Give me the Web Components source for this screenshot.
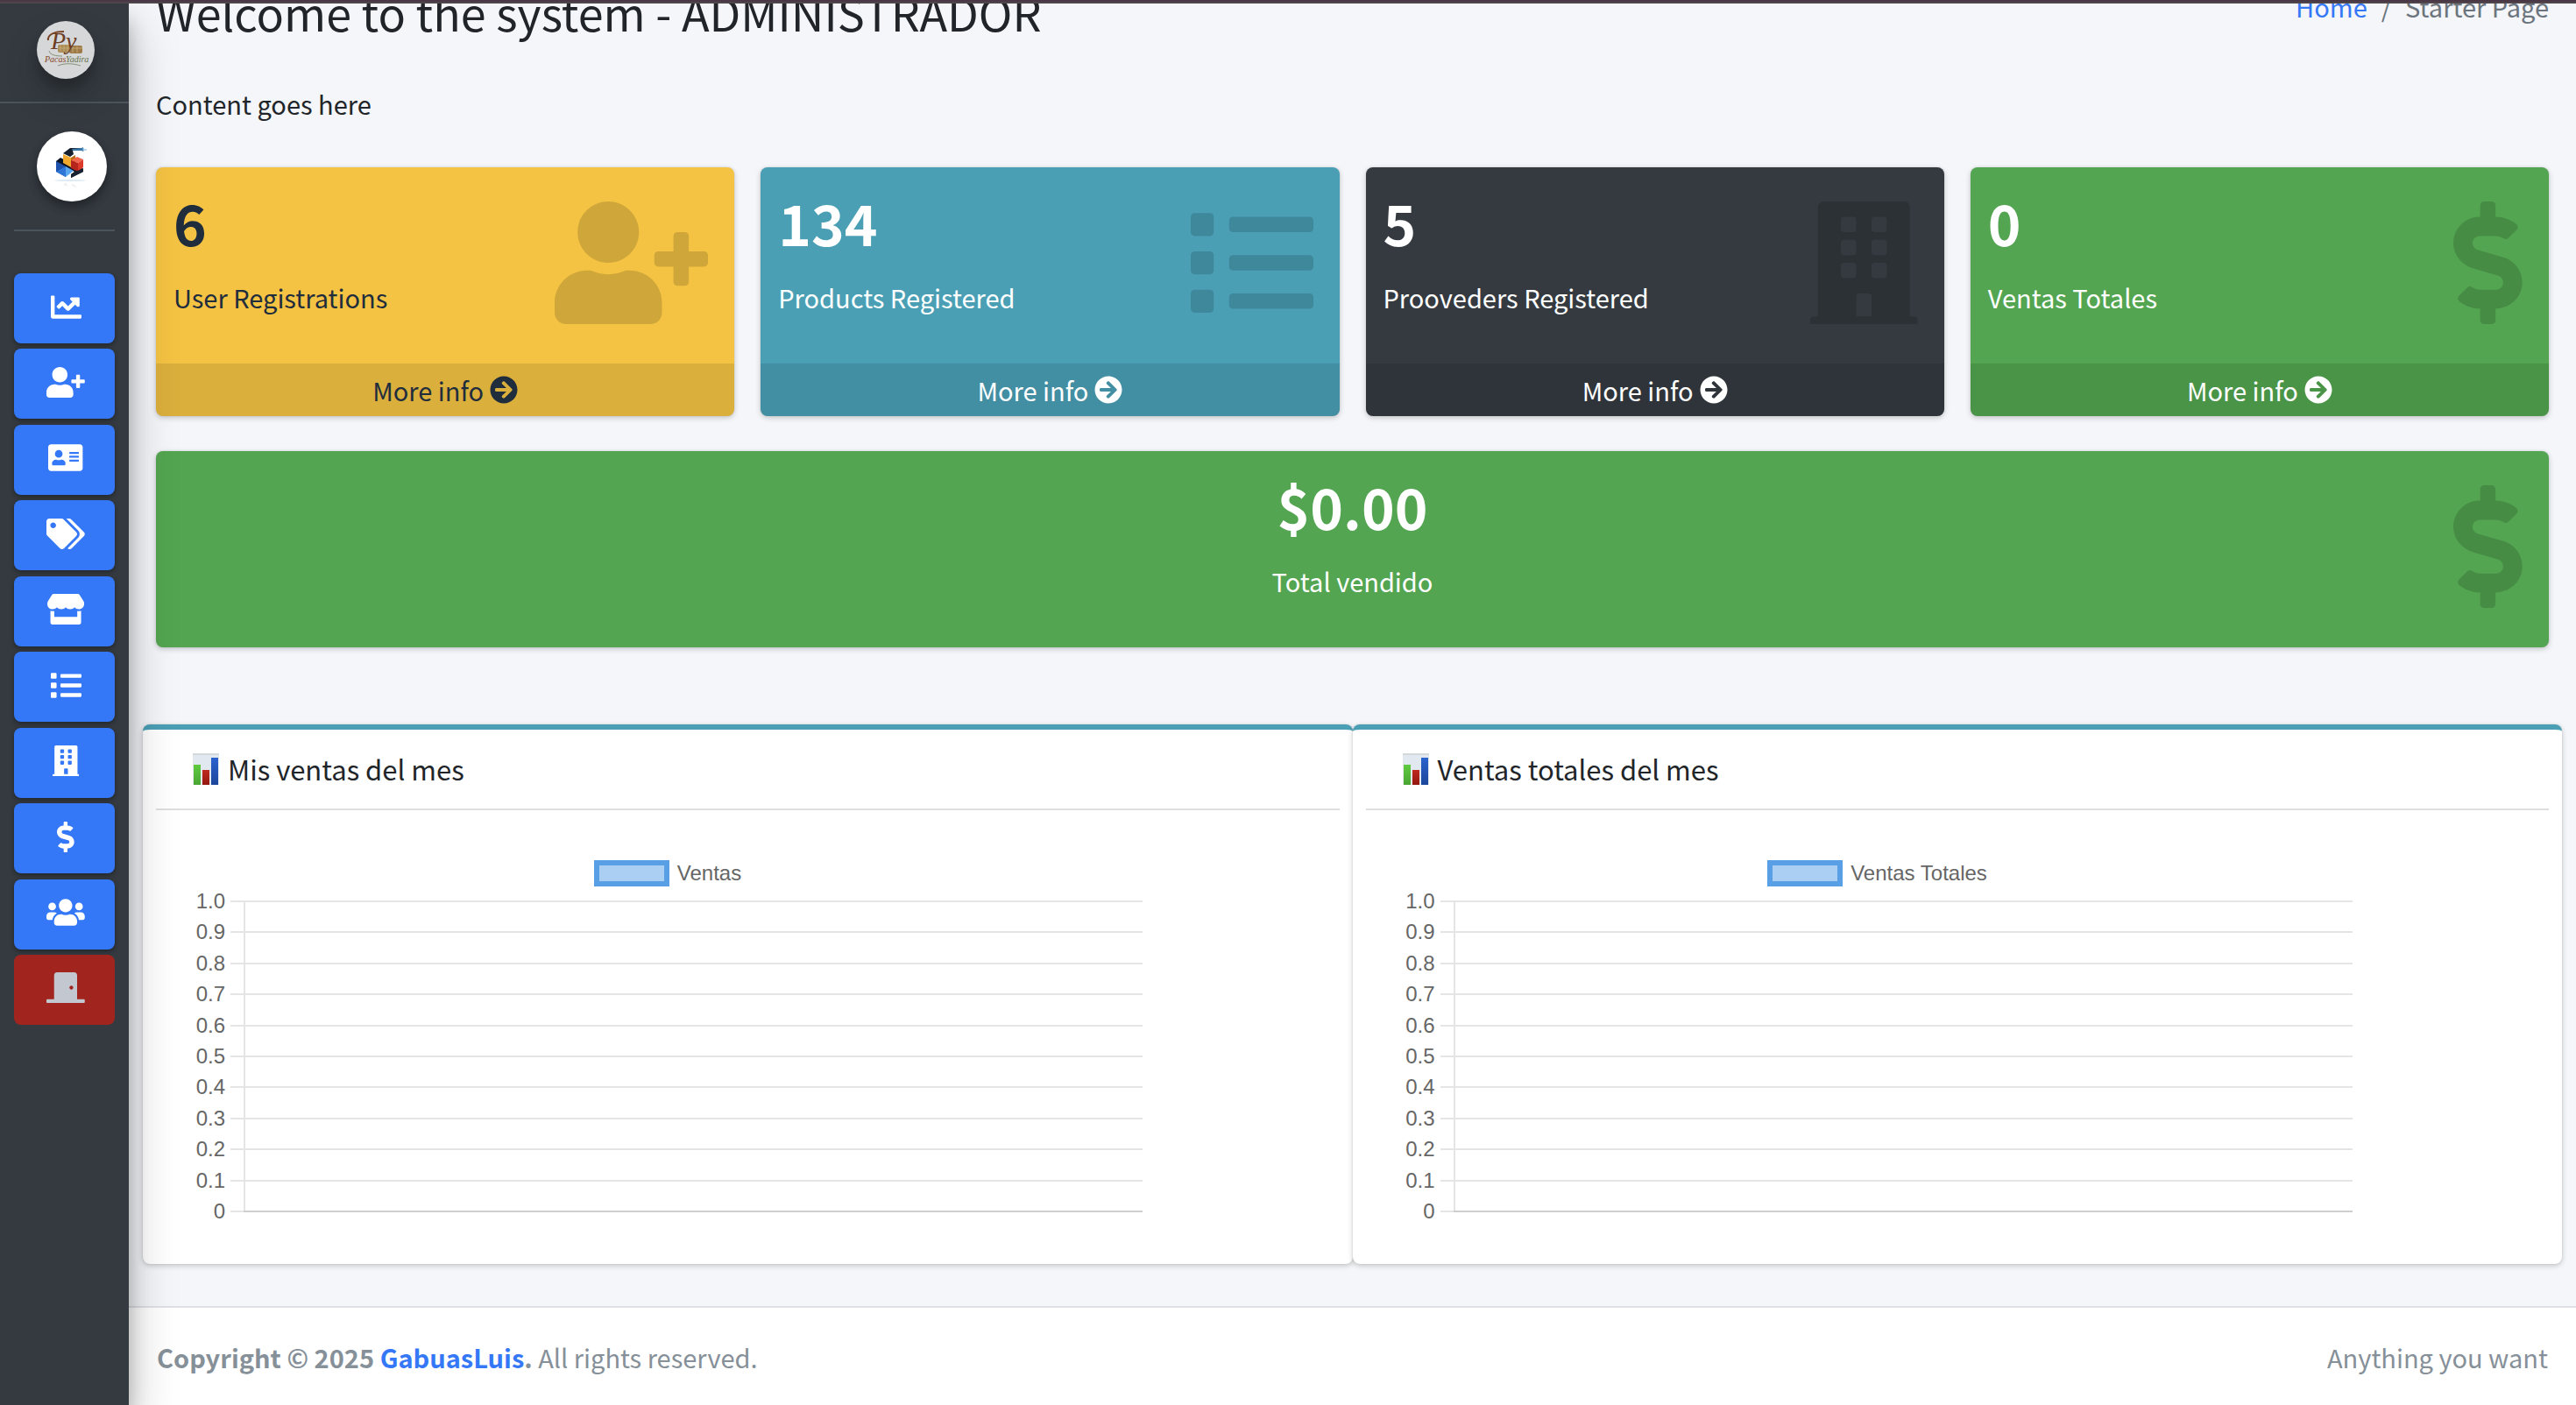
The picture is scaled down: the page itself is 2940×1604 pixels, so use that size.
<!DOCTYPE html>
<html lang="es">
<head>
<meta charset="utf-8">
<title>Starter Page</title>
<style>
  html, body { margin: 0; height: 100%; }
  body {
    overflow: hidden;
    background: #f4f6f9;
    color: #212529;
    font-family: "Noto Sans CJK SC", "Open Sans", sans-serif;
    font-size: 29px;
    line-height: 48px;
    --blue: #3578f7;
    --lift: 0 0 2px rgba(0,0,0,.125), 0 2px 6px rgba(0,0,0,.2);
  }
</style>
</head>
<body>
<app-shell>
  <side-bar slot="side"></side-bar>
  <page-header slot="main" heading="Welcome to the system - ADMINISTRADOR"></page-header>
  <page-content slot="main">
    <p slot="intro" style="margin:0">Content goes here</p>
    <stat-box slot="stats" tone="warning" value="6" icon="user-plus" link>User Registrations</stat-box>
    <stat-box slot="stats" tone="info" value="134" icon="list" link>Products Registered</stat-box>
    <stat-box slot="stats" tone="dark" value="5" icon="building" link>Prooveders Registered</stat-box>
    <stat-box slot="stats" tone="success" value="0" icon="dollar" link>Ventas Totales</stat-box>
    <stat-box slot="total" tone="success" value="$0.00" icon="dollar" centered>Total vendido</stat-box>
    <chart-card slot="charts" legend="Ventas">Mis ventas del mes</chart-card>
    <chart-card slot="charts" legend="Ventas Totales">Ventas totales del mes</chart-card>
  </page-content>
  <page-footer slot="main"></page-footer>
</app-shell>

<script>
const ICONS = {
  "chart-line": [512, "M496 384H64V80c0-8.84-7.16-16-16-16H16C7.16 64 0 71.16 0 80v336c0 17.67 14.33 32 32 32h464c8.84 0 16-7.16 16-16v-32c0-8.84-7.16-16-16-16zM464 96H345.94c-21.38 0-32.09 25.85-16.97 40.97l32.4 32.4L288 242.75l-73.37-73.37c-12.5-12.5-32.76-12.5-45.25 0l-68.69 68.69c-6.25 6.25-6.25 16.38 0 22.63l22.62 22.62c6.25 6.25 16.38 6.25 22.63 0L192 237.25l73.37 73.37c12.5 12.5 32.76 12.5 45.25 0l96-96 32.4 32.4c15.12 15.12 40.97 4.41 40.97-16.97V112c.01-8.84-7.15-16-15.99-16z"],
  "user-plus": [640, "M624 208h-64v-64c0-8.8-7.2-16-16-16h-32c-8.8 0-16 7.2-16 16v64h-64c-8.8 0-16 7.2-16 16v32c0 8.8 7.2 16 16 16h64v64c0 8.8 7.2 16 16 16h32c8.8 0 16-7.2 16-16v-64h64c8.8 0 16-7.2 16-16v-32c0-8.8-7.2-16-16-16zm-400 48c70.7 0 128-57.3 128-128S294.7 0 224 0 96 57.3 96 128s57.3 128 128 128zm89.6 32h-16.7c-22.2 10.2-46.9 16-72.9 16s-50.6-5.8-72.9-16h-16.7C60.2 288 0 348.2 0 422.4V464c0 26.5 21.5 48 48 48h352c26.5 0 48-21.5 48-48v-41.6c0-74.2-60.2-134.4-134.4-134.4z"],
  "address-card": [576, "M528 32H48C21.5 32 0 53.5 0 80v352c0 26.5 21.5 48 48 48h480c26.5 0 48-21.5 48-48V80c0-26.5-21.5-48-48-48zm-352 96c35.3 0 64 28.7 64 64s-28.7 64-64 64-64-28.7-64-64 28.7-64 64-64zm112 236.8c0 10.6-10 19.2-22.4 19.2H86.4C74 384 64 375.4 64 364.8v-19.2c0-31.8 30.1-57.6 67.2-57.6h5c12.3 5.1 25.7 8 39.8 8s27.6-2.9 39.8-8h5c37.1 0 67.2 25.8 67.2 57.6v19.2zM512 312c0 4.4-3.6 8-8 8H360c-4.4 0-8-3.6-8-8v-16c0-4.4 3.6-8 8-8h144c4.4 0 8 3.6 8 8v16zm0-64c0 4.4-3.6 8-8 8H360c-4.4 0-8-3.6-8-8v-16c0-4.4 3.6-8 8-8h144c4.4 0 8 3.6 8 8v16zm0-64c0 4.4-3.6 8-8 8H360c-4.4 0-8-3.6-8-8v-16c0-4.4 3.6-8 8-8h144c4.4 0 8 3.6 8 8v16z"],
  "tags": [640, "M497.941 225.941L286.059 14.059A48 48 0 0 0 252.118 0H48C21.49 0 0 21.49 0 48v204.118a48 48 0 0 0 14.059 33.941l211.882 211.882c18.744 18.745 49.136 18.746 67.882 0l204.118-204.118c18.745-18.745 18.745-49.137 0-67.882zM112 160c-26.51 0-48-21.49-48-48s21.49-48 48-48 48 21.49 48 48-21.49 48-48 48zm513.941 133.823L421.823 497.941c-18.745 18.745-49.137 18.745-67.882 0l-.36-.36L527.64 323.522c16.999-16.999 26.36-39.6 26.36-63.64s-9.362-46.641-26.36-63.64L331.397 0h48.721a48 48 0 0 1 33.941 14.059l211.882 211.882c18.745 18.745 18.745 49.137 0 67.882z"],
  "store": [616, "M602 118.6L537.1 15C531.3 5.7 521 0 510 0H106C95 0 84.7 5.7 78.9 15L14 118.6c-33.5 53.5-3.8 127.9 58.8 136.4 4.5.6 9.1.9 13.7.9 29.6 0 55.8-13 73.8-33.1 18 20.1 44.3 33.1 73.8 33.1 29.6 0 55.8-13 73.8-33.1 18 20.1 44.3 33.1 73.8 33.1 29.6 0 55.8-13 73.8-33.1 18.1 20.1 44.3 33.1 73.8 33.1 4.7 0 9.2-.3 13.7-.9 62.8-8.4 92.6-82.8 59-136.4zM529.5 288c-10 0-19.9-1.5-29.5-3.8V384H116v-99.8c-9.6 2.2-19.5 3.8-29.5 3.8-6 0-12.1-.4-18-1.2-5.6-.8-11.1-2.1-16.4-3.6V480c0 17.7 14.3 32 32 32h448c17.7 0 32-14.3 32-32V283.2c-5.4 1.6-10.8 2.9-16.4 3.6-6.1.8-12.1 1.2-18.2 1.2z"],
  "list": [512, "M80 368H16a16 16 0 0 0-16 16v64a16 16 0 0 0 16 16h64a16 16 0 0 0 16-16v-64a16 16 0 0 0-16-16zm0-320H16A16 16 0 0 0 0 64v64a16 16 0 0 0 16 16h64a16 16 0 0 0 16-16V64a16 16 0 0 0-16-16zm0 160H16a16 16 0 0 0-16 16v64a16 16 0 0 0 16 16h64a16 16 0 0 0 16-16v-64a16 16 0 0 0-16-16zm416 176H176a16 16 0 0 0-16 16v32a16 16 0 0 0 16 16h320a16 16 0 0 0 16-16v-32a16 16 0 0 0-16-16zm0-320H176a16 16 0 0 0-16 16v32a16 16 0 0 0 16 16h320a16 16 0 0 0 16-16V80a16 16 0 0 0-16-16zm0 160H176a16 16 0 0 0-16 16v32a16 16 0 0 0 16 16h320a16 16 0 0 0 16-16v-32a16 16 0 0 0-16-16z"],
  "building": [448, "M436 480h-20V24c0-13.255-10.745-24-24-24H56C42.745 0 32 10.745 32 24v456H12c-6.627 0-12 5.373-12 12v20h448v-20c0-6.627-5.373-12-12-12zM128 76c0-6.627 5.373-12 12-12h40c6.627 0 12 5.373 12 12v40c0 6.627-5.373 12-12 12h-40c-6.627 0-12-5.373-12-12V76zm0 96c0-6.627 5.373-12 12-12h40c6.627 0 12 5.373 12 12v40c0 6.627-5.373 12-12 12h-40c-6.627 0-12-5.373-12-12v-40zm52 148h-40c-6.627 0-12-5.373-12-12v-40c0-6.627 5.373-12 12-12h40c6.627 0 12 5.373 12 12v40c0 6.627-5.373 12-12 12zm76 160h-64v-84c0-6.627 5.373-12 12-12h40c6.627 0 12 5.373 12 12v84zm64-172c0 6.627-5.373 12-12 12h-40c-6.627 0-12-5.373-12-12v-40c0-6.627 5.373-12 12-12h40c6.627 0 12 5.373 12 12v40zm0-96c0 6.627-5.373 12-12 12h-40c-6.627 0-12-5.373-12-12v-40c0-6.627 5.373-12 12-12h40c6.627 0 12 5.373 12 12v40zm0-96c0 6.627-5.373 12-12 12h-40c-6.627 0-12-5.373-12-12V76c0-6.627 5.373-12 12-12h40c6.627 0 12 5.373 12 12v40z"],
  "dollar": [288, "M209.2 233.4l-108-31.6C88.7 198.2 80 186.5 80 173.5c0-16.3 13.2-29.5 29.5-29.5h66.3c12.2 0 24.2 3.7 34.2 10.5 6.1 4.1 14.3 3.1 19.5-2l34.8-34c7.1-6.9 6.1-18.4-1.8-24.5C238 74.8 207.4 64.1 176 64V16c0-8.8-7.2-16-16-16h-32c-8.8 0-16 7.2-16 16v48h-2.5C45.8 64-5.4 118.7.5 183.6c4.2 46.1 39.4 83.6 83.8 96.6l102.5 30c12.5 3.7 21.2 15.3 21.2 28.3 0 16.3-13.2 29.5-29.5 29.5h-66.3C100 368 88 364.3 78 357.5c-6.1-4.1-14.3-3.1-19.5 2l-34.8 34c-7.1 6.9-6.1 18.4 1.8 24.5 24.5 19.2 55.1 29.9 86.5 30v48c0 8.8 7.2 16 16 16h32c8.8 0 16-7.2 16-16v-48.2c46.6-.9 90.3-28.6 105.7-72.7 21.5-61.6-14.6-124.8-72.5-141.7z"],
  "users": [640, "M96 224c35.3 0 64-28.7 64-64s-28.7-64-64-64-64 28.7-64 64 28.7 64 64 64zm448 0c35.3 0 64-28.7 64-64s-28.7-64-64-64-64 28.7-64 64 28.7 64 64 64zm32 32h-64c-17.6 0-33.5 7.1-45.1 18.6 40.3 22.1 68.9 62 75.1 109.4h66c17.7 0 32-14.3 32-32v-32c0-35.3-28.7-64-64-64zm-256 0c61.9 0 112-50.1 112-112S381.9 32 320 32 208 82.1 208 144s50.1 112 112 112zm76.8 32h-8.3c-20.8 10-43.9 16-68.5 16s-47.6-6-68.5-16h-8.3C179.6 288 128 339.6 128 403.2V432c0 26.5 21.5 48 48 48h288c26.5 0 48-21.5 48-48v-28.8c0-63.6-51.6-115.2-115.2-115.2zm-223.7-13.4C161.5 263.1 145.6 256 128 256H64c-35.3 0-64 28.7-64 64v32c0 17.7 14.3 32 32 32h65.9c6.3-47.4 34.9-87.3 75.2-109.4z"],
  "door": [640, "M624 448H512V50.8C512 22.78 490.47 0 464 0H175.99c-26.47 0-48 22.78-48 50.8V448H16c-8.84 0-16 7.16-16 16v32c0 8.84 7.16 16 16 16h608c8.84 0 16-7.16 16-16v-32c0-8.84-7.16-16-16-16zM415.99 288c-17.67 0-32-14.33-32-32s14.33-32 32-32 32 14.33 32 32c.01 17.67-14.32 32-32 32z"],
  "arrow": [512, "M256 8c137 0 248 111 248 248S393 504 256 504 8 393 8 256 119 8 256 8zm-28.9 143.6l75.5 72.4H120c-13.3 0-24 10.7-24 24v16c0 13.3 10.7 24 24 24h182.6l-75.5 72.4c-9.7 9.3-9.9 24.8-.4 34.3l11 10.9c9.4 9.4 24.6 9.4 33.9 0L404.3 273c9.4-9.4 9.4-24.6 0-33.9L271.6 106.3c-9.4-9.4-24.6-9.4-33.9 0l-11 10.9c-9.5 9.6-9.3 25.1.4 34.4z"]
};

/* Base class: renders the string returned by view() into an open shadow root. */
class Base extends HTMLElement {
  connectedCallback() {
    if (!this.shadowRoot) this.attachShadow({ mode: "open" }).innerHTML = this.view();
  }
}

customElements.define("fa-icon", class extends Base {
  view() {
    const [w, d] = ICONS[this.getAttribute("name")];
    return `<style>:host{display:inline-flex}svg{display:block;height:1em;fill:currentColor}</style>
      <svg viewBox="0 0 ${w} 512" aria-hidden="true"><path d="${d}"/></svg>`;
  }
});

customElements.define("app-shell", class extends Base {
  view() {
    return `<style>
      :host{display:flex;flex-direction:column;height:100vh;overflow:hidden}
      .strip{flex:none;height:2px;background:#4a3846;border-bottom:2px solid #4f454b;z-index:2}
      .body{flex:1;min-height:0;display:flex}
      main{flex:1;min-width:0;overflow:hidden}
    </style>
    <div class="strip"></div>
    <div class="body"><slot name="side"></slot><main><slot name="main"></slot></main></div>`;
  }
});

customElements.define("brand-logo", class extends Base {
  view() {
    return `<style>
      :host{display:block;width:66px;height:66px;border-radius:50%;opacity:.8;
        box-shadow:0 20px 40px rgba(0,0,0,.19),0 12px 12px rgba(0,0,0,.23)}
      svg{display:block}
    </style>
    <svg width="66" height="66" viewBox="0 0 66 66" role="img" aria-label="Pacas Yadira">
      <circle cx="33" cy="33" r="33" fill="#fff"/>
      <g fill="#c9a05c"><rect x="24" y="27" width="14" height="9" rx="2"/><rect x="37" y="28" width="15" height="9" rx="2" fill="#b98a4c"/></g>
      <path d="M27 27v8M31 27v8M35 27v8M41 29v7M46 29v7M24 31h28" stroke="#e6c27e" fill="none"/>
      <path d="M14 34c1 5 8 6 15 6M24 51c8-3 16-3 26 0" stroke="#9aa886" fill="none"/>
      <path d="M13 22c-1-7 8-10 18-10" stroke="#8a4a22" stroke-width="2" fill="none"/>
      <g font-family="Liberation Serif,serif" font-style="italic">
        <text x="16" y="32" font-size="28" fill="#7a3f1d">Py</text>
        <text x="9" y="47" font-size="10" fill="#9a4a26">Pacas</text>
        <text x="33" y="47" font-size="10" fill="#6f7f4e">Yadira</text>
      </g>
    </svg>`;
  }
});

customElements.define("user-avatar", class extends Base {
  view() {
    return `<style>
      :host{display:block;width:80px;height:80px;border-radius:50%;
        box-shadow:0 6px 12px rgba(0,0,0,.16),0 6px 12px rgba(0,0,0,.23)}
      svg{display:block}
    </style>
    <svg width="80" height="80" viewBox="0 0 80 80" aria-hidden="true">
      <circle cx="40" cy="40" r="40" fill="#fff"/>
      <path d="M22 34l5-4 26 13v3L39 53v-4l4-3-21-11z" fill="#0d1524"/>
      <path d="M30 25l8-6h13v3H41l1 4-4 3z" fill="#15202f"/>
      <path d="M40 20l11-1 2-1v5l-2-1H41z" fill="#3c78a8"/><path d="M53 19v4M53 21h4" stroke="#7db2dc"/>
      <path d="M30 26l9 4v11l-9-5z" fill="#f0a92c"/><path d="M39 30l5-3v8l-5 6z" fill="#b96d14"/>
      <path d="M39 33l7-4 7 3-6 4z" fill="#f0654c"/><path d="M39 33l8 3v10l-8-4z" fill="#b5251c"/><path d="M47 36l6-4v9l-6 5z" fill="#dc3a2b"/>
      <path d="M22 34l11 6v12l-11-6z" fill="#1f52ad"/><path d="M33 40l9 5-9 7z" fill="#59a8f0"/><path d="M22 46l11-6v12z" fill="#2f77d6"/>
      <path d="M44 46l9-4v4l-14 7v-4z" fill="#182230"/>
      <ellipse cx="38" cy="56" rx="18" ry="1" fill="#dcebf6"/>
      <path d="M30 61l3-3 3 5zM40 59l7 5-6-1z" fill="#eff1f3"/>
    </svg>`;
  }
});

customElements.define("nav-button", class extends Base {
  view() {
    const label = this.getAttribute("label");
    return `<style>
      :host{display:block;height:80px}
      a{display:flex;align-items:center;justify-content:center;box-sizing:border-box;height:100%;
        padding:0 0 4px 3px;border-radius:8px;background:var(--blue);color:#fff;font-size:35px;
        box-shadow:0 2px 6px rgba(0,0,0,.12),0 2px 4px rgba(0,0,0,.24)}
      :host([danger]) a{background:#a1251e;color:#c2c7d0;box-shadow:none}
    </style>
    <a href="#" aria-label="${label}"><fa-icon name="${this.getAttribute("icon")}"></fa-icon></a>`;
  }
});

customElements.define("side-bar", class extends Base {
  view() {
    const items = [["chart-line","Dashboard"],["user-plus","Usuarios"],["address-card","Clientes"],["tags","Marcas"],
      ["store","Tienda"],["list","Productos"],["building","Proveedores"],["dollar","Ventas"],["users","Roles"]];
    return `<style>
      :host{flex:none;display:flex;flex-direction:column;width:147px;background:#343a40;z-index:1;
        box-shadow:0 28px 56px rgba(0,0,0,.25),0 20px 20px rgba(0,0,0,.22)}
      .brand{padding:20px 0 26px 42px;border-bottom:2px solid #4b545c}
      .user{margin:0 16px;padding:32px 0 32px 26px;border-bottom:2px solid #4b545c}
      nav{display:flex;flex-direction:column;justify-content:space-between;height:858px;margin:48px 16px 0}
    </style>
    <div class="brand"><brand-logo></brand-logo></div>
    <div class="user"><user-avatar></user-avatar></div>
    <nav>${items.map(([i, l]) => `<nav-button icon="${i}" label="${l}"></nav-button>`).join("")}
      <nav-button icon="door" label="Salir" danger></nav-button></nav>`;
  }
});

customElements.define("page-header", class extends Base {
  view() {
    return `<style>
      :host{display:flex;justify-content:space-between;align-items:flex-start;margin-top:-25px;padding:0 31px 30px}
      h1{margin:0;font-size:52px;line-height:69px;font-weight:400}
      ol{display:flex;margin:0;padding:4px 0 0;list-style:none;color:#6c757d}
      li+li::before{content:"/";padding:0 16px}
      a{color:var(--blue);text-decoration:none}
    </style>
    <h1>${this.getAttribute("heading")}</h1>
    <ol><li><a href="#">Home</a></li><li>Starter Page</li></ol>`;
  }
});

customElements.define("page-content", class extends Base {
  view() {
    return `<style>
      :host{display:block;padding:16px 16px 48px}
      .intro,.stats,.total{margin:0 15px}
      .stats{display:grid;grid-template-columns:repeat(4,1fr);gap:30px;margin-top:49px}
      .total{margin-top:40px}
      .charts{display:grid;grid-template-columns:1fr 1fr;margin-top:88px}
    </style>
    <div class="intro"><slot name="intro"></slot></div>
    <div class="stats"><slot name="stats"></slot></div>
    <div class="total"><slot name="total"></slot></div>
    <div class="charts"><slot name="charts"></slot></div>`;
  }
});

customElements.define("stat-box", class extends Base {
  view() {
    const more = this.hasAttribute("link")
      ? `<a href="#">More info <fa-icon name="arrow"></fa-icon></a>` : "";
    return `<style>
      :host{display:block;overflow:hidden;border-radius:8px;box-shadow:var(--lift);color:#fff}
      :host([tone=warning]){background:#f4c343;color:#1f2d3d}
      :host([tone=info]){background:#4a9fb5}
      :host([tone=dark]){background:#343a40}
      :host([tone=success]){background:#53a551}
      :host([centered]){text-align:center}
      .top{display:grid}
      .inner,.icon{grid-area:1/1}
      .inner{padding:20px 20px 52px}
      h3{margin:0 0 20px;font-size:64px;line-height:84px;font-weight:700}
      p{margin:0}
      .icon{justify-self:end;margin:39px 30px 0 0;font-size:140px;color:rgba(0,0,0,.15)}
      a{display:flex;align-items:center;justify-content:center;gap:7px;padding:6px 0;background:rgba(0,0,0,.1);
        color:inherit;text-decoration:none}
      a fa-icon{font-size:32px}
    </style>
    <div class="top">
      <div class="inner"><h3>${this.getAttribute("value")}</h3><p><slot></slot></p></div>
      <fa-icon class="icon" name="${this.getAttribute("icon")}"></fa-icon>
    </div>${more}`;
  }
});

customElements.define("line-plot", class extends Base {
  view() {
    const ticks = ["1.0","0.9","0.8","0.7","0.6","0.5","0.4","0.3","0.2","0.1","0"];
    return `<style>
      :host{display:block;width:1088px;max-width:100%;color:#666;
        font-family:"Liberation Sans",Arial,sans-serif;font-size:24px;line-height:30px}
      .legend{display:flex;justify-content:center;gap:9px}
      .swatch{box-sizing:border-box;width:86px;height:30px;border:6px solid #589fe6;background:#abcff3}
      .plot{display:grid;height:384px;margin-top:2px}
      ul,.axis{grid-area:1/1}
      ul{display:flex;flex-direction:column;justify-content:space-between;margin:0;padding:0 2px 0 0;list-style:none}
      li{display:flex;align-items:center;height:30px}
      span{width:39px;margin-right:6px;text-align:right}
      i{flex:1;height:2px;background:#e5e5e5}
      li:last-child i{background:linear-gradient(90deg,#e5e5e5 15px,#cecece 15px)}
      .axis{justify-self:start;width:2px;height:354px;margin:15px 0 0 60px;background:#e5e5e5}
    </style>
    <div class="legend"><div class="swatch"></div>${this.getAttribute("legend")}</div>
    <div class="plot"><div class="axis"></div><ul>${ticks.map(t => `<li><span>${t}</span><i></i></li>`).join("")}</ul></div>`;
  }
});

customElements.define("chart-card", class extends Base {
  view() {
    return `<style>
      :host{display:block;padding:0 15px;border-top:6px solid #4a9fb5;border-radius:8px;background:#fff;box-shadow:var(--lift)}
      header{display:flex;align-items:center;gap:10px;padding:24px 42px;border-bottom:2px solid #dfdfdf}
      h3{margin:0;font-size:31px;line-height:42px;font-weight:400}
      .body{padding:57px 40px 45px}
    </style>
    <header>
      <svg width="30" height="36" viewBox="0 0 30 36" role="img" aria-label="bar chart">
        <defs>
          <linearGradient id="g" x2="0" y2="1"><stop stop-color="#5fcb3f"/><stop offset="1" stop-color="#4aa534"/></linearGradient>
          <linearGradient id="r" x2="0" y2="1"><stop stop-color="#c02a20"/><stop offset="1" stop-color="#93180f"/></linearGradient>
          <linearGradient id="b" x2="0" y2="1"><stop stop-color="#2a62cf"/><stop offset="1" stop-color="#1c469a"/></linearGradient>
        </defs>
        <path d="M0 0h30v36H0z" fill="#e1e8f0"/><path d="M0 0h30v2H0z" fill="#d3d8db"/>
        <path d="M1 13h8v23H1z" fill="url(#g)"/><path d="M11 19h8v17h-8z" fill="url(#r)"/><path d="M21 5h8v31h-8z" fill="url(#b)"/>
      </svg>
      <h3><slot></slot></h3>
    </header>
    <div class="body"><line-plot legend="${this.getAttribute("legend")}"></line-plot></div>`;
  }
});

customElements.define("page-footer", class extends Base {
  view() {
    return `<style>
      :host{display:flex;justify-content:space-between;padding:32px;border-top:2px solid #dee2e6;background:#fff;color:#869099}
      a{color:var(--blue);text-decoration:none}
    </style>
    <div><strong>Copyright © 2025 <a href="#">GabuasLuis</a>.</strong> All rights reserved.</div>
    <div>Anything you want</div>`;
  }
});
</script>
</body>
</html>
